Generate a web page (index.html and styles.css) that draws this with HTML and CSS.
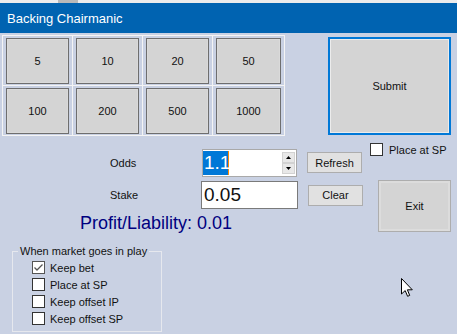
FILE: index.html
```html
<!DOCTYPE html>
<html lang="en">
<head>
  <meta charset="UTF-8">
  <meta name="viewport" content="width=device-width, initial-scale=1.0">
  <title>Backing Chairmanic</title>
  <link rel="stylesheet" href="styles.css">
</head>
<body>

  <div class="taskstrip"><span class="shadow"></span></div>
  <div class="titlebar">Backing Chairmanic</div>

  <div class="form">
    <div class="top">
      <div class="stakes">
        <div class="cell"><button class="chip">5</button></div>
        <div class="cell"><button class="chip">10</button></div>
        <div class="cell"><button class="chip">20</button></div>
        <div class="cell"><button class="chip">50</button></div>
        <div class="cell"><button class="chip">100</button></div>
        <div class="cell"><button class="chip">200</button></div>
        <div class="cell"><button class="chip">500</button></div>
        <div class="cell"><button class="chip">1000</button></div>
      </div>
      <button class="submit">Submit</button>
    </div>

    <div class="middle">
      <div class="entry">
        <div class="row">
          <span class="lbl">Odds</span>
          <div class="spin">
            <span class="sel">1.1</span>
            <div class="arrows">
              <span class="arrow">
                <svg width="7" height="4" viewBox="0 0 7 4"><path d="M3.5 0 L7 4 H0 Z" fill="#000"/></svg>
              </span>
              <span class="arrow">
                <svg width="7" height="4" viewBox="0 0 7 4"><path d="M0 0 H7 L3.5 4 Z" fill="#000"/></svg>
              </span>
            </div>
          </div>
          <button class="small refresh">Refresh</button>
        </div>
        <div class="row stake-row">
          <span class="lbl">Stake</span>
          <div class="textbox">0.05</div>
          <button class="small">Clear</button>
        </div>
        <div class="profit">Profit/Liability: 0.01</div>
      </div>

      <div class="side">
        <div class="check"><span class="box"></span>Place at SP</div>
        <button class="exit">Exit</button>
      </div>
    </div>

    <fieldset class="inplay">
      <legend>When market goes in play</legend>
      <div class="check">
        <span class="box ticked">
          <svg width="11" height="11" viewBox="0 0 11 11"><path d="M1.5 5.5 L4 8 L9.5 2.5" fill="none" stroke="#555" stroke-width="1.3"/></svg>
        </span>Keep bet
      </div>
      <div class="check"><span class="box"></span>Place at SP</div>
      <div class="check"><span class="box"></span>Keep offset IP</div>
      <div class="check"><span class="box"></span>Keep offset SP</div>
    </fieldset>
  </div>

  <svg class="cursor" width="13" height="20" viewBox="0 0 13 20">
    <path d="M0.5 0.5 V16 L4.2 12.6 L6.6 18.3 L8.7 17.4 L6.4 11.8 H11.3 Z" fill="#fff" stroke="#000" stroke-width="1" stroke-linejoin="round"/>
  </svg>

</body>
</html>
```

FILE: styles.css
```css
body {
  margin: 0;
  width: 457px;
  height: 334px;
  overflow: hidden;
  position: relative;
  background-color: #c9d1e3;
  font-family: "Liberation Sans", Arial, sans-serif;
  color: #111;
}

button {
  font-family: "Liberation Sans", Arial, sans-serif;
  color: #111;
  padding: 0;
  cursor: default;
}

.taskstrip {
  height: 3px;
  background-color: #ececec;
  display: flex;
}

.taskstrip .shadow {
  width: 20px;
  margin-left: 58px;
  background-color: #b9b9b9;
}

.titlebar {
  height: 30px;
  background-color: #0063b1;
  color: #fff;
  font-size: 13px;
  display: flex;
  align-items: center;
  padding-left: 7px;
}

/* stake buttons + submit */
.top {
  display: flex;
  margin-top: 2px;
}

.stakes {
  margin-left: 2px;
  display: grid;
  grid-template-columns: 69px 69px 69px 71px;
  grid-template-rows: 49px 49px;
  gap: 1px;
  padding: 1px;
  background-color: #f4f4f4;
}

.cell {
  background-color: #c9d1e3;
  padding: 2px 3px 1px 3px;
  display: flex;
}

.chip {
  flex: 1;
  height: 46px;
  background-color: #d4d4d4;
  border: 1px solid #6e6e6e;
  box-shadow: inset 0 0 0 1px #dadada;
  font-size: 11px;
}

.submit {
  margin-left: 43px;
  margin-top: 2px;
  width: 123px;
  height: 98px;
  background-color: #d4d4d4;
  border: 2px solid #0078d7;
  box-shadow: inset 0 0 0 1px #ececec;
  font-size: 11px;
}

/* odds / stake */
.middle {
  display: flex;
}

.entry {
  width: 363px;
  padding-top: 13px;
}

.row {
  display: flex;
  align-items: center;
  height: 28px;
}

.stake-row {
  margin-top: 4px;
}

.lbl {
  width: 202px;
  padding-left: 110px;
  box-sizing: border-box;
  font-size: 11px;
}

.spin {
  width: 95px;
  height: 28px;
  box-sizing: border-box;
  border: 1px solid #a9a9a9;
  background-color: #fff;
  display: flex;
  align-items: center;
  padding: 1px 1px 1px 0;
}

.sel {
  background-color: #0078d7;
  color: #fff;
  font-size: 19px;
  height: 24px;
  line-height: 24px;
  padding: 0 1px 0 1px;
  width: 23px;
  border-right: 1px solid #ff8a00;
}

.arrows {
  margin-left: auto;
  display: flex;
  flex-direction: column;
  height: 22px;
}

.arrow {
  width: 13px;
  height: 11px;
  box-sizing: border-box;
  background-color: #e8e8e8;
  border: 1px solid #d2d2d2;
  display: flex;
  align-items: center;
  justify-content: center;
}

.arrow svg {
  width: 5px;
  height: 3px;
}

.textbox {
  width: 97px;
  height: 28px;
  box-sizing: border-box;
  border: 1px solid #7a7a7a;
  background-color: #fff;
  font-size: 19px;
  line-height: 26px;
  padding-left: 2px;
  margin-left: -1px;
}

.small {
  margin-left: 10px;
  width: 55px;
  height: 21px;
  background-color: #e1e1e1;
  border: 1px solid #adadad;
  font-size: 11px;
}

.refresh {
  margin-top: -1px;
}

.profit {
  margin-top: 4px;
  padding-left: 80px;
  font-size: 18px;
  line-height: 20px;
  color: #000080;
}

.side {
  padding-top: 7px;
}

.side .check {
  margin-left: 7px;
}

.exit {
  margin-left: 15px;
  margin-top: 24px;
  width: 73px;
  height: 52px;
  background-color: #d4d4d4;
  border: 1px solid #adadad;
  box-shadow: inset 0 0 0 2px #dcdcdc;
  font-size: 11px;
}

/* checkboxes */
.check {
  display: flex;
  align-items: center;
  height: 13px;
  font-size: 11px;
}

.box {
  width: 13px;
  height: 13px;
  box-sizing: border-box;
  border: 1px solid #333;
  background-color: #fff;
  margin-right: 6px;
  display: flex;
  align-items: center;
  justify-content: center;
}

.box.ticked {
  border-color: #555;
}

.inplay {
  margin: 12px 0 0 12px;
  width: 150px;
  box-sizing: border-box;
  border: 1px solid #e6e8ee;
  padding: 0 0 6px 5px;
}

.inplay legend {
  font-size: 11px;
  line-height: 13px;
  padding: 0 2px;
}

.inplay .check {
  margin-left: 14px;
  margin-top: 4px;
}

.inplay .check:first-of-type {
  margin-top: 3px;
}

.inplay .box {
  margin-right: 5px;
}

.cursor {
  position: absolute;
  left: 401px;
  top: 278px;
}
```
